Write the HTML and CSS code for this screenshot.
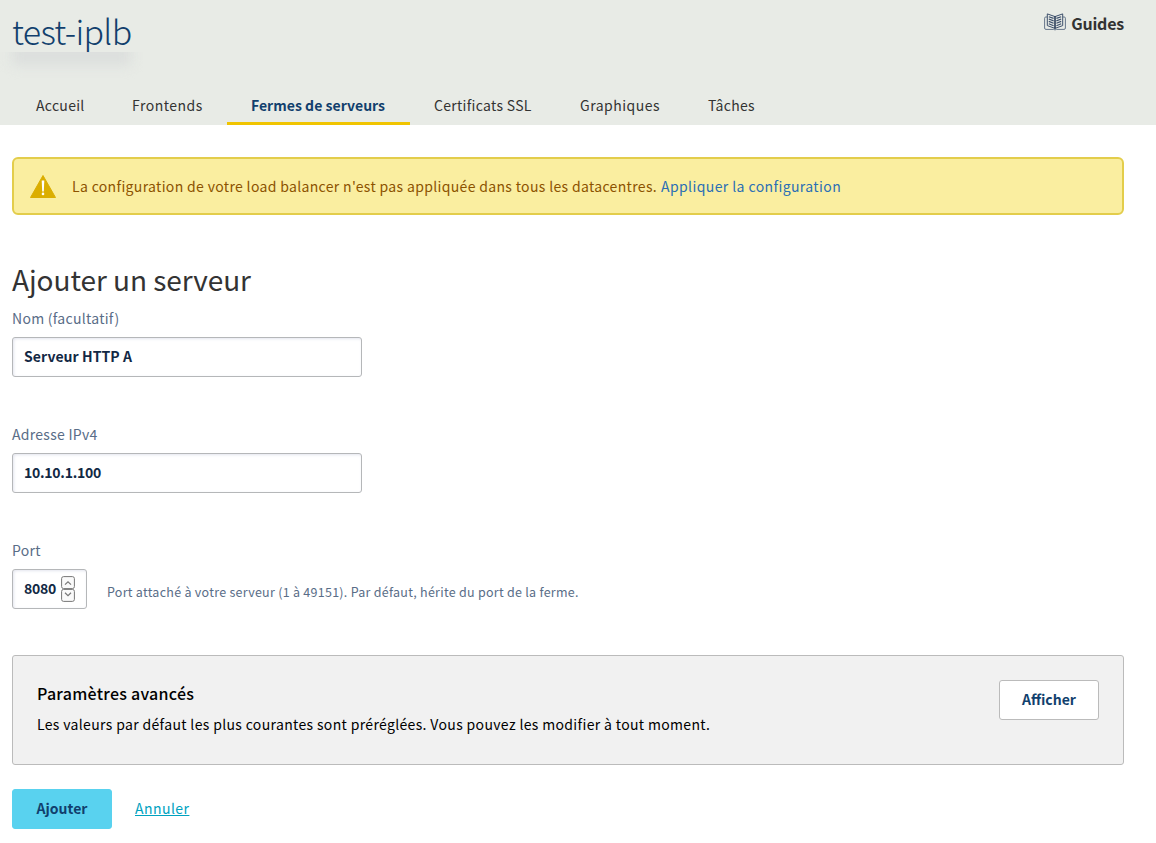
FILE: index.html
```html
<!DOCTYPE html>
<html lang="fr">
<head>
<meta charset="utf-8">
<title>test-iplb</title>
<link rel="stylesheet" href="styles.css">
</head>
<body>
<header class="header">
  <div class="header-top">
    <h1 class="title">test-iplb</h1>
    <a class="guides">
      <svg class="guides-icon" width="22" height="18" viewBox="0 0 22 18" fill="none" stroke="#3c4f6b">
        <path d="M3 4H1.8Q.6 4 .6 5.2V15Q.6 16.4 2 16.4H9.5Q11 17.4 12.5 16.4H20Q21.4 16.4 21.4 15V5.2Q21.4 4 20.2 4H19" stroke-width="1" stroke="#66768a"/>
        <path d="M11 3.6L3.3.9V12.6L11 15.4L18.7 12.6V.9Z" stroke-width="1"/>
        <path d="M11 3.5V15.5" stroke-width="1.5" stroke="#1c2f4d"/>
        <path d="M4.8 3.7L9.6 5.4M4.8 6L9.6 7.9M4.8 8.4L9.6 10.3M4.8 10.8L9.6 12.8M17.2 3.7L12.4 5.4M17.2 6L12.4 7.9M17.2 8.4L12.4 10.3M17.2 10.8L12.4 12.8" stroke-width="1.2"/>
      </svg>
      <span>Guides</span>
    </a>
  </div>
  <nav class="tabs">
    <a class="tab tab-home">Accueil</a>
    <a class="tab tab-front">Frontends</a>
    <a class="tab tab-farms active">Fermes de serveurs</a>
    <a class="tab tab-ssl">Certificats SSL</a>
    <a class="tab tab-graphs">Graphiques</a>
    <a class="tab tab-tasks">Tâches</a>
  </nav>
</header>
<main class="main">
  <div class="alert">
    <svg width="26" height="23" viewBox="0 0 26 23">
      <path d="M13 .5L25.5 22.5H.5Z" fill="#dbae00" stroke="#dbae00" stroke-linejoin="round"/>
      <path d="M11.7 5.5h2.6l-.5 11h-1.6Z" fill="#fff"/>
      <circle cx="13" cy="18.9" r="1.3" fill="#fff"/>
    </svg>
    <p class="alert-text"><span>La configuration de votre load balancer n'est pas appliquée dans tous les datacentres.</span><a class="alert-link">Appliquer la configuration</a></p>
  </div>
  <h2 class="heading">Ajouter un serveur</h2>
  <form class="form">
    <div class="field">
      <label class="label" for="name">Nom (facultatif)</label>
      <input class="input" id="name" value="Serveur HTTP A">
    </div>
    <div class="field">
      <label class="label" for="ip">Adresse IPv4</label>
      <input class="input input-ip" id="ip" value="10.10.1.100">
    </div>
    <div class="field field-port">
      <label class="label" for="port">Port</label>
      <div class="port-row">
        <div class="number">
          <input class="number-input" id="port" value="8080">
          <svg width="14" height="26" viewBox="0 0 14 26" fill="#fafafa" stroke="#777">
            <rect x=".6" y=".6" width="12.8" height="12" rx="2"/>
            <rect x=".6" y="13.4" width="12.8" height="12" rx="2"/>
            <path d="M4 8.6L7 5.8L10 8.6M4 16.8L7 19.6L10 16.8" fill="none" stroke-width="1.2"/>
          </svg>
        </div>
        <p class="help">Port attaché à votre serveur (1 à 49151). Par défaut, hérite du port de la ferme.</p>
      </div>
    </div>
    <section class="advanced">
      <div>
        <h3 class="adv-title">Paramètres avancés</h3>
        <p class="adv-text">Les valeurs par défaut les plus courantes sont préréglées. Vous pouvez les modifier à tout moment.</p>
      </div>
      <button class="button button-show" type="button">Afficher</button>
    </section>
    <div class="actions">
      <button class="button button-add" type="button">Ajouter</button>
      <a class="cancel">Annuler</a>
    </div>
  </form>
</main>
</body>
</html>
```
FILE: styles.css
```css
* { box-sizing: border-box; }
body {
  margin: 0;
  background: #fff;
  color: #333;
  font-family: "Noto Sans CJK SC", "Noto Sans", sans-serif;
  font-size: 14px;
  line-height: 20px;
  letter-spacing: .3px;
  white-space: nowrap;
}
h1, h2, h3, p { margin: 0; font-weight: 400; }
.header { height: 125px; background: #e8ebe6; display: flex; flex-direction: column; justify-content: space-between; }
.header-top { display: flex; justify-content: space-between; align-items: flex-start; padding: 11px 32px 0 12px; }
.title { font-size: 34px; line-height: 40px; font-weight: 200; color: #113f6d; letter-spacing: -.7px; position: relative; }
.title::after {
  content: "";
  position: absolute;
  left: 0;
  right: 0;
  top: 31px;
  height: 24px;
  background: #dcdfdd;
  filter: blur(6px);
  clip-path: inset(10px -16px -16px -16px);
}
.guides { display: flex; gap: 5px; font-size: 16px; line-height: 24px; font-weight: 700; letter-spacing: -.2px; }
.guides-icon { margin-top: 2px; }
.tabs { display: flex; padding-left: 12px; }
.tab { height: 39px; line-height: 39px; padding-left: 24px; border-bottom: 3px solid transparent; }
.tab-home { width: 96px; }
.tab-front { width: 119px; letter-spacing: .5px; }
.tab-farms { width: 183px; }
.tab-ssl { width: 146px; }
.tab-graphs { width: 128px; letter-spacing: .5px; }
.tab.active { color: #113f6d; font-weight: 700; border-color: #f0c400; letter-spacing: .03px; }
.main { padding: 32px 32px 0 12px; }
.alert { height: 58px; border: 2px solid #e3cd4b; border-radius: 6px; background: #faeea0; display: flex; align-items: center; gap: 16px; padding-left: 16px; color: #8c5300; }
.alert-text { display: flex; gap: 4px; letter-spacing: .34px; }
.alert-link { color: #2a6fb5; letter-spacing: .4px; }
.heading { margin-top: 44px; margin-bottom: 2px; font-size: 28px; line-height: 40px; letter-spacing: -.06px; }
.form { display: flex; flex-direction: column; }
.field { height: 116px; padding-top: 7px; }
.field-port { height: 122px; }
.label { display: block; color: #596d87; line-height: 20px; margin-bottom: 9px; letter-spacing: .28px; }
.input, .number { border: 1px solid #b5b7b9; border-radius: 3px; box-shadow: inset 1px 1px 3px #e3e5ee; background: #fff; height: 40px; }
.input, .number-input { display: block; font: inherit; font-weight: 700; letter-spacing: .07px; color: #122844; outline: 0; }
.input { width: 350px; padding: 0 11px 2px; }
.input-ip { letter-spacing: -.25px; }
.port-row { display: flex; gap: 20px; }
.number { width: 75px; display: flex; align-items: center; padding-left: 11px; gap: 3px; }
.number-input { width: 34px; padding: 0 0 2px; border: 0; background: transparent; letter-spacing: -.3px; }
.help { font-size: 12.5px; line-height: 46px; color: #596d87; letter-spacing: .27px; }
.advanced { height: 110px; border: 1px solid #bbb; border-radius: 3px; background: #f1f1f1; color: #000; padding: 24px; display: flex; justify-content: space-between; align-items: flex-start; }
.adv-title { font-size: 16px; line-height: 26px; font-weight: 500; letter-spacing: .26px; }
.adv-text { line-height: 36px; letter-spacing: .345px; }
.button { width: 100px; height: 40px; padding: 0 0 2px; border: 1px solid #bbb; border-radius: 3px; background: #fff; font: inherit; font-weight: 700; letter-spacing: 0; color: #113f6d; }
.actions { margin-top: 24px; display: flex; align-items: center; gap: 23px; }
.button-add { background: #59d2ef; border-color: #59d2ef; }
.cancel { color: #00a2bf; text-decoration: underline; letter-spacing: .45px; padding-bottom: 2px; }
```
